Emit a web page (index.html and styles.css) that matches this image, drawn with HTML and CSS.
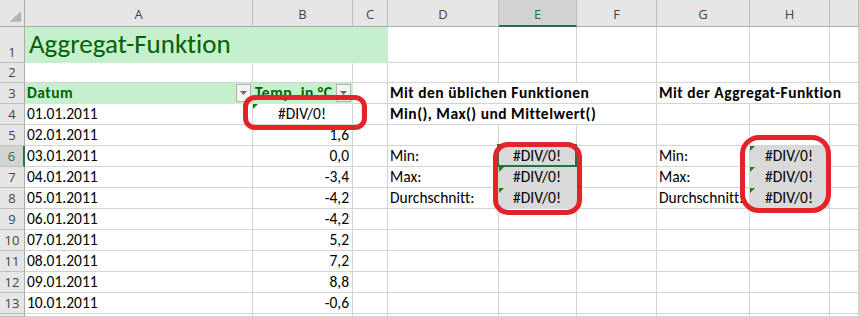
FILE: index.html
```html
<!DOCTYPE html>
<html lang="de">
<head>
<meta charset="utf-8">
<title>Aggregat-Funktion</title>
<link rel="stylesheet" href="styles.css">
</head>
<body>
<div class="sheet">
  <!-- column headers -->
  <div class="hd corner"><svg width="25" height="27" viewBox="0 0 25 27"><polygon points="22,11 22,22 10,22" fill="#b4b4b4"/></svg></div>
  <div class="hd">A</div>
  <div class="hd">B</div>
  <div class="hd">C</div>
  <div class="hd">D</div>
  <div class="hd hd-sel">E</div>
  <div class="hd">F</div>
  <div class="hd">G</div>
  <div class="hd">H</div>
  <div class="hd"></div>

  <!-- row 1 -->
  <div class="rh">1</div>
  <div class="c good title span3">Aggregat-Funktion</div>
  <div class="c"></div><div class="c"></div><div class="c"></div><div class="c"></div><div class="c"></div><div class="c"></div>

  <!-- row 2 -->
  <div class="rh">2</div>
  <div class="c"></div><div class="c"></div><div class="c"></div><div class="c"></div><div class="c"></div><div class="c"></div><div class="c"></div><div class="c"></div><div class="c"></div>

  <!-- row 3 -->
  <div class="rh">3</div>
  <div class="c good b">Datum<span class="filter"><svg width="15" height="18" viewBox="0 0 15 18"><polygon points="4,7 11,7 7.5,11" fill="#6d6d6d"/></svg></span></div>
  <div class="c good b">Temp. in °C<span class="filter"><svg width="15" height="18" viewBox="0 0 15 18"><polygon points="4,7 11,7 7.5,11" fill="#6d6d6d"/></svg></span></div>
  <div class="c"></div>
  <div class="c b span3">Mit den üblichen Funktionen</div>
  <div class="c b span3">Mit der Aggregat-Funktion</div>

  <!-- row 4 -->
  <div class="rh">4</div>
  <div class="c">01.01.2011</div>
  <div class="c ctr err">#DIV/0!</div>
  <div class="c"></div>
  <div class="c b span3">Min(), Max() und Mittelwert()</div>
  <div class="c"></div><div class="c"></div><div class="c"></div>

  <!-- row 5 -->
  <div class="rh">5</div>
  <div class="c">02.01.2011</div>
  <div class="c r">1,6</div>
  <div class="c"></div><div class="c"></div><div class="c"></div><div class="c"></div><div class="c"></div><div class="c"></div><div class="c"></div>

  <!-- row 6 -->
  <div class="rh rh-sel">6</div>
  <div class="c">03.01.2011</div>
  <div class="c r">0,0</div>
  <div class="c"></div>
  <div class="c">Min:</div>
  <div class="c grey ctr sel">#DIV/0!</div>
  <div class="c"></div>
  <div class="c">Min:</div>
  <div class="c grey ctr err">#DIV/0!</div>
  <div class="c"></div>

  <!-- row 7 -->
  <div class="rh">7</div>
  <div class="c">04.01.2011</div>
  <div class="c r">-3,4</div>
  <div class="c"></div>
  <div class="c">Max:</div>
  <div class="c grey ctr err">#DIV/0!</div>
  <div class="c"></div>
  <div class="c">Max:</div>
  <div class="c grey ctr err">#DIV/0!</div>
  <div class="c"></div>

  <!-- row 8 -->
  <div class="rh">8</div>
  <div class="c">05.01.2011</div>
  <div class="c r">-4,2</div>
  <div class="c"></div>
  <div class="c">Durchschnitt:</div>
  <div class="c grey ctr err">#DIV/0!</div>
  <div class="c"></div>
  <div class="c">Durchschnitt:</div>
  <div class="c grey ctr err">#DIV/0!</div>
  <div class="c"></div>

  <!-- rows 9 to 13 -->
  <div class="rh">9</div>
  <div class="c">06.01.2011</div>
  <div class="c r">-4,2</div>
  <div class="c"></div><div class="c"></div><div class="c"></div><div class="c"></div><div class="c"></div><div class="c"></div><div class="c"></div>

  <div class="rh">10</div>
  <div class="c">07.01.2011</div>
  <div class="c r">5,2</div>
  <div class="c"></div><div class="c"></div><div class="c"></div><div class="c"></div><div class="c"></div><div class="c"></div><div class="c"></div>

  <div class="rh">11</div>
  <div class="c">08.01.2011</div>
  <div class="c r">7,2</div>
  <div class="c"></div><div class="c"></div><div class="c"></div><div class="c"></div><div class="c"></div><div class="c"></div><div class="c"></div>

  <div class="rh">12</div>
  <div class="c">09.01.2011</div>
  <div class="c r">8,8</div>
  <div class="c"></div><div class="c"></div><div class="c"></div><div class="c"></div><div class="c"></div><div class="c"></div><div class="c"></div>

  <div class="rh">13</div>
  <div class="c">10.01.2011</div>
  <div class="c r">-0,6</div>
  <div class="c"></div><div class="c"></div><div class="c"></div><div class="c"></div><div class="c"></div><div class="c"></div><div class="c"></div>

  <!-- row 14, cut off by the window -->
  <div class="rh"></div>
  <div class="c"></div><div class="c"></div><div class="c"></div><div class="c"></div><div class="c"></div><div class="c"></div><div class="c"></div><div class="c"></div><div class="c"></div>

  <!-- red hand-drawn highlights -->
  <div class="mark mark-b4"></div>
  <div class="mark mark-e"></div>
  <div class="mark mark-h"></div>
</div>
</body>
</html>
```

FILE: styles.css
```css
html, body {
  margin: 0;
  background: #fff;
}

.sheet {
  position: relative;
  width: 859px;
  height: 317px;
  overflow: hidden;
  display: grid;
  grid-template-columns: 25px 228px 100px 35px 111px 78px 80px 93px 80px 1fr;
  grid-template-rows: 27px 36px 20px repeat(11, 21px) 1fr;
  font-family: "Carlito", "Lato", "Liberation Sans", sans-serif;
  font-size: 15.5px;
  font-variant-ligatures: none;
  color: #000;
}

/* column and row headers */
.hd, .rh {
  box-sizing: border-box;
  background: #e6e6e6;
  color: #444;
  font-family: "Open Sans", "Noto Sans", sans-serif;
  font-size: 13px;
  display: flex;
  justify-content: center;
}

.hd {
  border-right: 1px solid #bfbfbf;
  border-bottom: 1px solid #ababab;
  align-items: flex-start;
  line-height: 26px;
  padding-top: 1px;
}

.corner {
  padding: 0;
  line-height: 0;
  border-right-color: #ababab;
}

.hd-sel {
  background: #d2d2d2;
  color: #217346;
  border-bottom: 2px solid #217346;
}

.rh {
  border-right: 1px solid #ababab;
  border-bottom: 1px solid #bfbfbf;
  align-items: flex-end;
  line-height: 20px;
}

.rh-sel {
  background: #d2d2d2;
  color: #217346;
  border-right: 2px solid #217346;
}

/* cells */
.c {
  position: relative;
  box-sizing: border-box;
  border-right: 1px solid #d4d4d4;
  border-bottom: 1px solid #d4d4d4;
  padding: 0 3px 0 2px;
  white-space: nowrap;
  line-height: 20px;
  display: flex;
  align-items: flex-end;
  min-width: 0;
}

.span3 {
  grid-column: span 3;
}

.r { justify-content: flex-end; }
.ctr { justify-content: center; }

.b {
  font-weight: bold;
  letter-spacing: 0.5px;
}

.good {
  background: #c6efce;
  color: #006100;
  border-color: #c6efce;
}

.title {
  font-size: 27px;
  line-height: 33px;
  padding-left: 4px;
  padding-bottom: 2px;
}

.grey {
  background: #d9d9d9;
  border-color: #d9d9d9;
}

/* autofilter drop-down button */
.filter {
  position: absolute;
  right: 1px;
  top: 1px;
  width: 15px;
  height: 18px;
  box-sizing: border-box;
  background: #f4f4f4;
  border: 1px solid #b2b2b2;
  line-height: 0;
  overflow: hidden;
}

.filter svg {
  margin: -1px;
}

/* error indicator in the top-left corner */
.err::before {
  content: "";
  position: absolute;
  left: 0;
  top: 0;
  border-top: 5px solid #1e7b1e;
  border-right: 5px solid transparent;
}

/* active cell frame */
.sel::after {
  content: "";
  position: absolute;
  left: -2px;
  top: -2px;
  right: -1px;
  bottom: -1px;
  border: 2px solid #217346;
}

/* red highlight rings */
.mark {
  position: absolute;
  box-sizing: border-box;
  border: 5px solid #e3222a;
  z-index: 2;
}

.mark-b4 {
  left: 243px;
  top: 95px;
  width: 124px;
  height: 35px;
  border-radius: 12px;
}

.mark-e {
  left: 493px;
  top: 142px;
  width: 89px;
  height: 73px;
  border-radius: 15px;
}

.mark-h {
  left: 740px;
  top: 135px;
  width: 91px;
  height: 78px;
  border-radius: 19px;
}
```
